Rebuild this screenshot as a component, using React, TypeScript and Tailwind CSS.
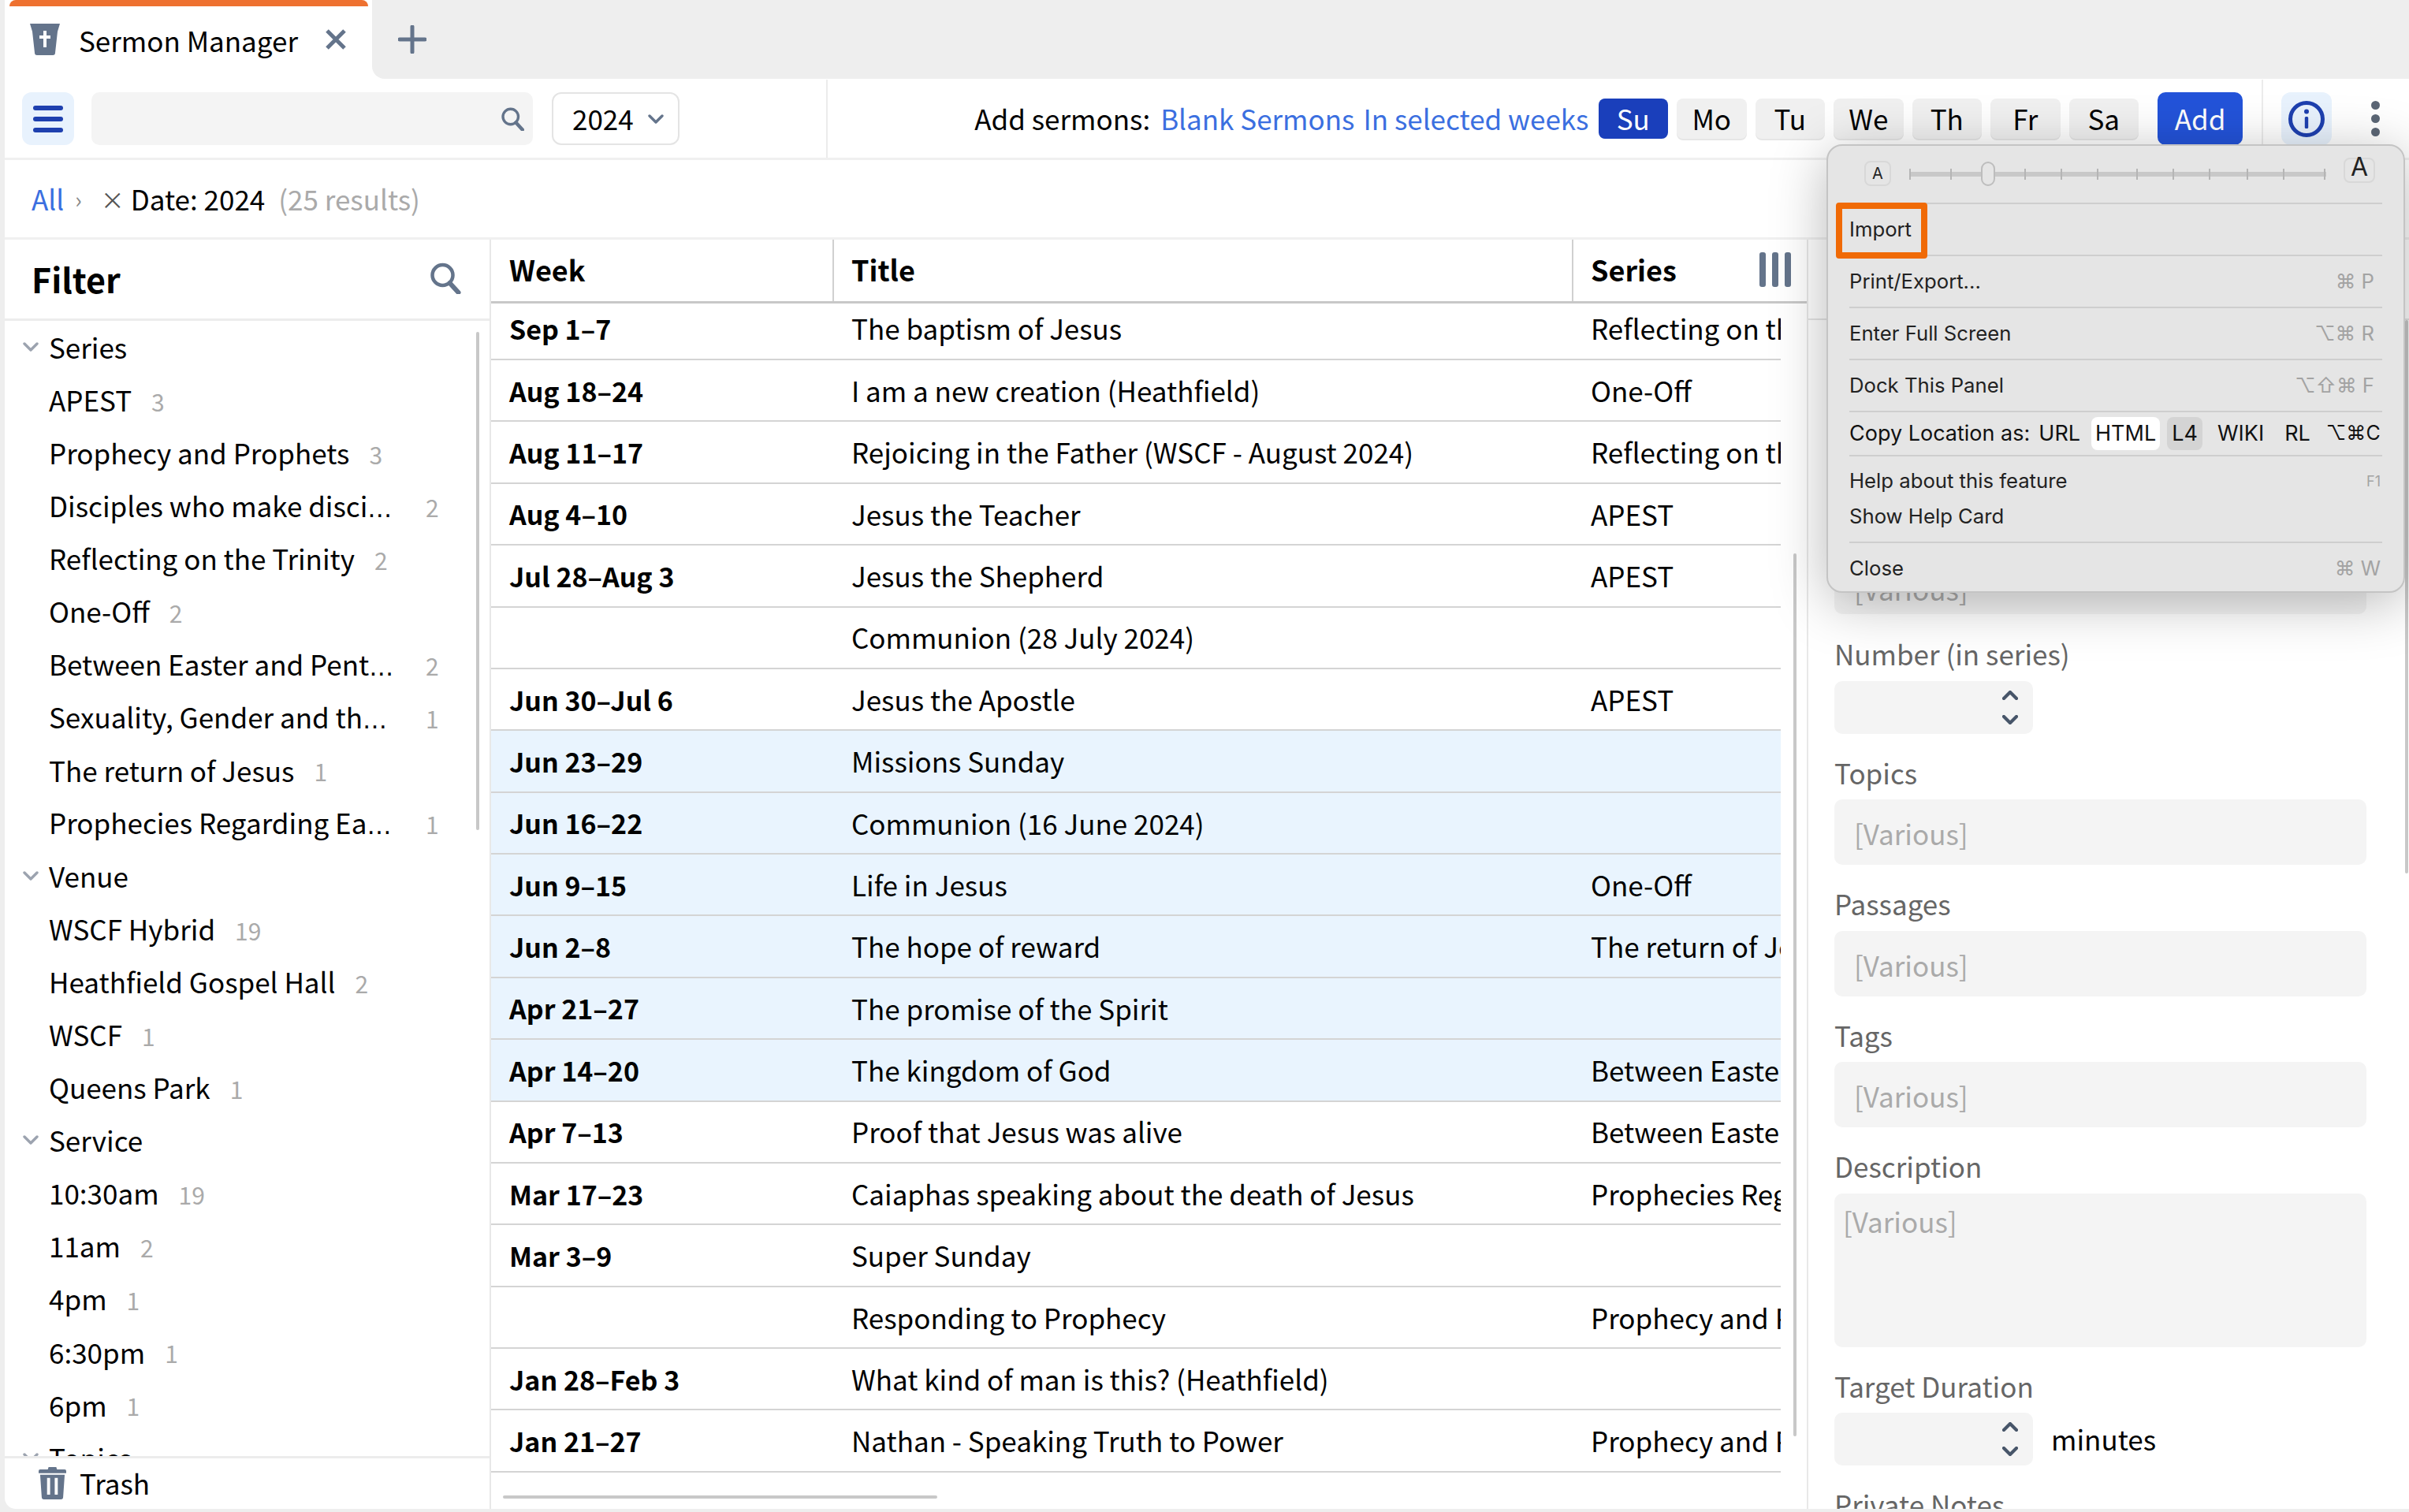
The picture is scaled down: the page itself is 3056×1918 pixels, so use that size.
import React from 'react'

interface FilterRow {
  label: string
  count?: number
  group?: boolean
  cut?: boolean
}

interface SermonRow {
  week: string
  title: string
  series: string
  selected?: boolean
}

const filterRows: FilterRow[] = [
  { label: 'Series', group: true },
  { label: 'APEST', count: 3 },
  { label: 'Prophecy and Prophets', count: 3 },
  { label: 'Disciples who make disci', count: 2, cut: true },
  { label: 'Reflecting on the Trinity', count: 2 },
  { label: 'One-Off', count: 2 },
  { label: 'Between Easter and Pent', count: 2, cut: true },
  { label: 'Sexuality, Gender and th', count: 1, cut: true },
  { label: 'The return of Jesus', count: 1 },
  { label: 'Prophecies Regarding Ea', count: 1, cut: true },
  { label: 'Venue', group: true },
  { label: 'WSCF Hybrid', count: 19 },
  { label: 'Heathfield Gospel Hall', count: 2 },
  { label: 'WSCF', count: 1 },
  { label: 'Queens Park', count: 1 },
  { label: 'Service', group: true },
  { label: '10:30am', count: 19 },
  { label: '11am', count: 2 },
  { label: '4pm', count: 1 },
  { label: '6:30pm', count: 1 },
  { label: '6pm', count: 1 },
  { label: 'Topics', group: true },
]

const sermons: SermonRow[] = [
  { week: 'Sep 1–7', title: 'The baptism of Jesus', series: 'Reflecting on the Trinity' },
  { week: 'Aug 18–24', title: 'I am a new creation (Heathfield)', series: 'One-Off' },
  { week: 'Aug 11–17', title: 'Rejoicing in the Father (WSCF - August 2024)', series: 'Reflecting on the Trinity' },
  { week: 'Aug 4–10', title: 'Jesus the Teacher', series: 'APEST' },
  { week: 'Jul 28–Aug 3', title: 'Jesus the Shepherd', series: 'APEST' },
  { week: '', title: 'Communion (28 July 2024)', series: '' },
  { week: 'Jun 30–Jul 6', title: 'Jesus the Apostle', series: 'APEST' },
  { week: 'Jun 23–29', title: 'Missions Sunday', series: '', selected: true },
  { week: 'Jun 16–22', title: 'Communion (16 June 2024)', series: '', selected: true },
  { week: 'Jun 9–15', title: 'Life in Jesus', series: 'One-Off', selected: true },
  { week: 'Jun 2–8', title: 'The hope of reward', series: 'The return of Jesus', selected: true },
  { week: 'Apr 21–27', title: 'The promise of the Spirit', series: '', selected: true },
  { week: 'Apr 14–20', title: 'The kingdom of God', series: 'Between Easter and Pentecost', selected: true },
  { week: 'Apr 7–13', title: 'Proof that Jesus was alive', series: 'Between Easter and Pentecost' },
  { week: 'Mar 17–23', title: 'Caiaphas speaking about the death of Jesus', series: 'Prophecies Regarding Easter' },
  { week: 'Mar 3–9', title: 'Super Sunday', series: '' },
  { week: '', title: 'Responding to Prophecy', series: 'Prophecy and Prophets' },
  { week: 'Jan 28–Feb 3', title: 'What kind of man is this? (Heathfield)', series: '' },
  { week: 'Jan 21–27', title: 'Nathan - Speaking Truth to Power', series: 'Prophecy and Prophets' },
]

const days = ['Su', 'Mo', 'Tu', 'We', 'Th', 'Fr', 'Sa']

function SearchIcon({ className }: { className: string }): React.JSX.Element {
  return (
    <svg viewBox="0 0 40 40" className={className} fill="none" stroke="#64748b">
      <circle cx="17" cy="16" r="13" strokeWidth="4.5" />
      <path d="M26 26 L37 38" strokeWidth="6" strokeLinecap="round" />
    </svg>
  )
}

function Chevron({ up, className }: { up?: boolean; className: string }): React.JSX.Element {
  return (
    <svg viewBox="0 0 20 12" className={className} fill="none" stroke="currentColor" strokeWidth="3.4" strokeLinecap="round" strokeLinejoin="round">
      <path d={up ? 'M2 10 L10 2 L18 10' : 'M2 2 L10 10 L18 2'} />
    </svg>
  )
}

function Stepper(): React.JSX.Element {
  return (
    <div className="flex h-[67px] w-[252px] flex-col items-end justify-center gap-[19px] rounded-[10px] bg-[#f4f4f4] pr-[19px] text-[#475569]">
      <Chevron up className="h-[12px] w-[20px] stroke-[4.2px]" />
      <Chevron className="h-[12px] w-[20px] stroke-[4.2px]" />
    </div>
  )
}

function FieldLabel({ children }: { children: React.ReactNode }): React.JSX.Element {
  return <div className="mb-[16.5px] pt-[31px] text-[35px] leading-[36px] text-[#666]">{children}</div>
}

function VariousInput({ textTop = 'pt-[4px]' }: { textTop?: string }): React.JSX.Element {
  return (
    <div className={`flex h-[83px] w-[675px] items-center rounded-[10px] bg-[#f4f4f4] pl-[25px] text-[35px] text-[#aaa] ${textTop}`}>[Various]</div>
  )
}

function FilterPanel(): React.JSX.Element {
  return (
    <div className="relative flex w-[615px] shrink-0 flex-col">
      <div className="flex h-[103px] shrink-0 items-center justify-between border-b-[3px] border-[#ececec] pb-[2px] pl-[34px] pr-[36px]">
        <span className="text-[43px] font-bold leading-none">Filter</span>
        <SearchIcon className="h-[40px] w-[41px]" />
      </div>
      <div className="min-h-0 flex-1 overflow-hidden">
        {filterRows.map((row) => (
          <div key={row.label} className="flex h-[67.1px] items-center pb-[1px] text-[35px]">
            {row.group ? (
              <>
                <Chevron className="ml-[22px] mr-[12px] h-[12px] w-[22px] text-[#9ca3af]" />
                <span>{row.label}</span>
              </>
            ) : (
              <>
                <span className={`ml-[56px] whitespace-nowrap ${row.cut ? 'w-[445px]' : ''}`}>
                  {row.label}
                  {row.cut && <span className="font-['DejaVu_Sans',sans-serif] text-[31px]">…</span>}
                </span>
                <span className={`pt-[4px] text-[30px] text-[#aaa] ${row.cut ? 'ml-[33px]' : 'ml-[25px]'}`}>{row.count}</span>
              </>
            )}
          </div>
        ))}
      </div>
      <div className="flex h-[67px] shrink-0 items-center border-t-[3px] border-[#ececec] pb-[2px] pl-[43px]">
        <svg viewBox="0 0 36 42" className="h-[41px] w-[35px]" fill="#64748b">
          <path d="M13 0 H23 L24 3 H34 Q36 3 36 5 V8 H0 V5 Q0 3 2 3 H12 Z" />
          <path fillRule="evenodd" d="M2 10 H34 L32 39 Q32 42 29 42 H7 Q4 42 4 39 Z M11 14 V36 H15 V14 Z M21 14 V36 H25 V14 Z" />
        </svg>
        <span className="ml-[17px] text-[35px]">Trash</span>
      </div>
      <div className="absolute left-[598px] top-[117px] h-[632px] w-[4px] rounded-full bg-[#c8c8c8]" />
    </div>
  )
}

function SermonTable(): React.JSX.Element {
  return (
    <div className="relative flex min-w-0 flex-1 flex-col border-x-2 border-[#e8e8e8]">
      <div className="relative grid h-[81px] shrink-0 grid-cols-[433px_938px_1fr] items-center border-b-[3px] border-[#c8c8c8] text-[36px] font-bold">
        <div className="pb-[4px] pl-[23px]">Week</div>
        <div className="flex h-[78px] items-center border-l-2 border-[#d0d0d0] pb-[4px] pl-[22px]">Title</div>
        <div className="flex h-[78px] items-center border-l-2 border-[#d0d0d0] pb-[4px] pl-[22px]">Series</div>
        <div className="absolute right-[20px] top-[16px] flex gap-[8px]">
          <div className="h-[44px] w-[8px] rounded-[3px] bg-[#64748b]" />
          <div className="h-[44px] w-[8px] rounded-[3px] bg-[#64748b]" />
          <div className="h-[44px] w-[8px] rounded-[3px] bg-[#64748b]" />
        </div>
      </div>
      <div className="w-[1636px]">
        {sermons.map((row, i) => (
          <div
            key={row.title}
            className={`grid grid-cols-[433px_938px_265px] items-center border-b-2 border-[#d4d4d4] text-[35px] ${i === 0 ? 'h-[72px] pb-[8px]' : 'h-[78.39px]'} ${row.selected ? 'bg-[#e9f4fe]' : ''}`}
          >
            <div className="pl-[23px] text-[34px] font-bold">{row.week}</div>
            <div className="pl-[24px]">{row.title}</div>
            <div className="overflow-hidden whitespace-nowrap pl-[24px]">{row.series}</div>
          </div>
        ))}
      </div>
      <div className="mt-[29px] ml-[15px] h-[4px] w-[551px] rounded-full bg-[#c8c8c8]" />
      <div className="absolute left-[1652px] top-[398px] h-[1120px] w-[4px] rounded-full bg-[#c8c8c8]" />
    </div>
  )
}

function DetailPanel(): React.JSX.Element {
  return (
    <div className="relative w-[762px] shrink-0 overflow-hidden">
      <div className="h-[101px] border-b-[3px] border-[#f0f0f0]" />
      <div className="h-[102px] border-b-[2px] border-[#e4e4e4]" />
      <div className="pl-[33px] pt-[290px]">
        <VariousInput textTop="pt-[20px]" />
        <div className="h-px" />
        <FieldLabel>Number (in series)</FieldLabel>
        <Stepper />
        <FieldLabel>Topics</FieldLabel>
        <VariousInput />
        <FieldLabel>Passages</FieldLabel>
        <VariousInput />
        <FieldLabel>Tags</FieldLabel>
        <VariousInput />
        <FieldLabel>Description</FieldLabel>
        <div className="h-[195px] w-[675px] rounded-[10px] bg-[#f4f4f4] pl-[11px] pt-[10px] text-[35px] leading-[50px] text-[#aaa]">[Various]</div>
        <FieldLabel>Target Duration</FieldLabel>
        <div className="flex items-center gap-[23px]">
          <Stepper />
          <span className="text-[35px]">minutes</span>
        </div>
        <FieldLabel>Private Notes</FieldLabel>
      </div>
      <div className="absolute right-[1px] top-[203px] h-[702px] w-[4px] rounded-full bg-[#c8c8c8]" />
    </div>
  )
}

function MenuRow({ label, keys, tight }: { label: string; keys?: string; tight?: boolean }): React.JSX.Element {
  return (
    <div className={`flex h-[66px] items-center justify-between ${tight ? 'pb-[2px] pr-[2px]' : 'pr-[10px] border-b-2 border-[#cecece]'}`}>
      <span>{label}</span>
      {keys && <span className="text-[#a3a3a3]">{keys}</span>}
    </div>
  )
}

function PanelMenu(): React.JSX.Element {
  return (
    <div className="absolute left-[2317px] top-[183px] h-[569px] w-[734px] rounded-[20px] border-2 border-[#c4c4c4] bg-[#e5e5e5] font-['Inter','DejaVu_Sans',sans-serif] text-[25.7px] text-[#222] shadow-[0_12px_70px_rgba(0,0,0,0.28)]">
      <div className="flex h-[72px] items-start pl-[46px] pt-[15px]">
        <div className="mt-[4px] flex h-[32px] w-[34px] items-center justify-center rounded-[8px] border-2 border-[#d8d8d8] text-[20px]">A</div>
        <svg viewBox="0 0 530 34" className="ml-[23px] mt-[4px] h-[34px] w-[530px]" fill="none">
          <rect x="1" y="14" width="528" height="6" fill="#c8c8c8" />
          <path
            d="M1 10V24 M53 10V24 M147 10V24 M193 10V24 M239 10V24 M289 10V24 M335 10V24 M381 10V24 M429 10V24 M475 10V24 M527 10V24"
            stroke="#b5b5b5"
            strokeWidth="2"
          />
          <rect x="92" y="2" width="16" height="29" rx="8" fill="#e5e5e5" stroke="#bdbdbd" strokeWidth="2" />
        </svg>
        <div className="ml-[21px] flex h-[32px] w-[40px] justify-center rounded-[8px] border-2 border-[#d8d8d8] text-[32px] leading-[20px]">A</div>
      </div>
      <div className="mx-[27px]">
        <div className="relative border-t-2 border-[#cecece]">
          <MenuRow label="Import" />
          <div className="absolute left-[-17px] top-[-2px] h-[71px] w-[116px] rounded-[4px] border-[8px] border-[#f06a06]" />
        </div>
        <MenuRow label="Print/Export..." keys="⌘ P" />
        <MenuRow label="Enter Full Screen" keys="⌥⌘ R" />
        <MenuRow label="Dock This Panel" keys="⌥⇧⌘ F" />
        <div className="flex h-[56px] items-center whitespace-nowrap border-b-2 border-[#cecece] text-[27px] text-[#111]">
          <span className="shrink-0">Copy Location as:</span>
          <span className="ml-[11px] shrink-0">URL</span>
          <span className="ml-[14px] shrink-0 rounded-[8px] bg-white px-[5px] py-[1px]">HTML</span>
          <span className="ml-[9px] shrink-0 rounded-[8px] bg-[#d4d4d4] px-[6px] py-[1px]">L4</span>
          <span className="ml-[19px] shrink-0">WIKI</span>
          <span className="ml-[26px] shrink-0">RL</span>
          <span className="ml-[20px] shrink-0 text-[25px]">⌥⌘C</span>
        </div>
        <div className="flex h-[110px] flex-col justify-center gap-[6px] border-b-2 border-[#cecece]">
          <div className="flex items-center justify-between pr-[2px]">
            <span>Help about this feature</span>
            <span className="text-[18px] text-[#a3a3a3]">F1</span>
          </div>
          <span>Show Help Card</span>
        </div>
        <MenuRow label="Close" keys="⌘ W" tight />
      </div>
    </div>
  )
}

export default function App(): React.JSX.Element {
  return (
    <div className="relative flex h-[1918px] w-[3056px] flex-col overflow-hidden bg-[#eeeeee] font-['Noto_Sans_CJK_KR',sans-serif] text-black">
      <div className="flex h-[100px] shrink-0 bg-white">
        <div className="w-[6px] bg-[#eeeeee]" />
        <div className="relative flex w-[466px] items-center rounded-t-[16px] bg-white pl-[32px]">
          <div className="absolute left-[6px] top-0 h-[8px] w-[455px] rounded-t-[10px] bg-[#ee7130]" />
          <svg viewBox="0 0 38 40" className="h-[40px] w-[38px] shrink-0" fill="#64748b">
            <path fillRule="evenodd" d="M0 0 H38 L35 10 L32 37 Q32 40 29 40 H9 Q6 40 6 37 L3 10 Z M17 9 V15 H12 V19 H17 V30 H21 V19 H26 V15 H21 V9 Z" />
          </svg>
          <span className="ml-[24px] whitespace-nowrap text-[35px] leading-none">Sermon Manager</span>
          <svg viewBox="0 0 28 28" className="ml-[34px] h-[28px] w-[28px] shrink-0" fill="none" stroke="#64748b" strokeWidth="5">
            <path d="M3 3 L25 25 M25 3 L3 25" />
          </svg>
        </div>
        <div className="flex flex-1 items-center rounded-bl-[16px] bg-[#eeeeee] pl-[33px]">
          <svg viewBox="0 0 36 36" className="h-[36px] w-[36px]" fill="none" stroke="#64748b" strokeWidth="5" strokeLinecap="round">
            <path d="M18 2 V34 M2 18 H34" />
          </svg>
        </div>
      </div>

      <div className="ml-[6px] mb-[4px] flex min-h-0 flex-1 flex-col rounded-bl-[14px] bg-white">
        <div className="flex h-[103px] shrink-0 items-center border-b-[3px] border-[#f0f0f0] pt-[1px] text-[35px]">
          <div className="flex h-full w-[1044px] shrink-0 items-center border-r-2 border-[#ececec] pl-[22px]">
            <div className="flex h-[67px] w-[66px] flex-col items-center justify-center gap-[8px] rounded-[12px] bg-[#e8f2fd]">
              <div className="h-[6px] w-[38px] rounded-full bg-[#1e40af]" />
              <div className="h-[6px] w-[38px] rounded-full bg-[#1e40af]" />
              <div className="h-[6px] w-[38px] rounded-full bg-[#1e40af]" />
            </div>
            <div className="ml-[22px] flex h-[67px] w-[560px] items-center justify-end rounded-[10px] bg-[#f4f4f4] pr-[11px]">
              <SearchIcon className="h-[30px] w-[30px]" />
            </div>
            <div className="ml-[24px] flex h-[67px] w-[162px] items-center rounded-[12px] border-2 border-[#e4e4e4] pl-[24px]">
              <span>2024</span>
              <Chevron className="ml-[17px] h-[12px] w-[22px] text-[#64748b]" />
            </div>
          </div>
          <div className="flex flex-1 items-center justify-end">
            <span>Add sermons:</span>
            <span className="ml-[13px] text-[#3b6fe0]">Blank Sermons</span>
            <span className="ml-[11px] text-[#3b6fe0]">In selected weeks</span>
            <div className="ml-[12px] flex gap-[11px]">
              {days.map((day) => (
                <div
                  key={day}
                  className={`flex h-[51px] w-[88.5px] items-center justify-center rounded-[8px] ${day === 'Su' ? 'bg-[#1a3fbb] text-white' : 'bg-[#f0f0f0] shadow-[0_2px_0_#e6e6e6]'}`}
                >
                  {day}
                </div>
              ))}
            </div>
            <div className="ml-[24px] flex h-[67px] w-[108px] items-center justify-center rounded-[10px] bg-[#2353d9] text-white">Add</div>
          </div>
          <div className="ml-[24px] flex h-full w-[187px] shrink-0 items-center border-l-2 border-[#ececec] pl-[23px]">
            <div className="flex h-[67px] w-[64px] items-center justify-center rounded-[12px] bg-[#e8f2fd]">
              <svg viewBox="0 0 48 48" className="h-[48px] w-[48px]" fill="none">
                <circle cx="24" cy="24" r="20.5" stroke="#1e40af" strokeWidth="5" />
                <circle cx="24" cy="14.5" r="3" fill="#1e40af" />
                <rect x="21.8" y="21" width="4.4" height="15" rx="1.5" fill="#1e40af" />
              </svg>
            </div>
            <div className="ml-[50px] flex flex-col gap-[6px]">
              <div className="h-[11px] w-[11px] rounded-full bg-[#5b6675]" />
              <div className="h-[11px] w-[11px] rounded-full bg-[#5b6675]" />
              <div className="h-[11px] w-[11px] rounded-full bg-[#5b6675]" />
            </div>
          </div>
        </div>

        <div className="flex min-h-0 flex-1">
          <div className="flex min-w-0 flex-1 flex-col">
            <div className="flex h-[101px] shrink-0 items-center border-b-[3px] border-[#f0f0f0] pl-[34px] text-[35px]">
              <span className="text-[#3b6fe0]">All</span>
              <span className="ml-[14px] text-[28px] text-[#888]">›</span>
              <span className="ml-[24px] text-[30px] text-[#555]">×</span>
              <span className="ml-[8px]">Date: 2024</span>
              <span className="ml-[17px] text-[#aaa]">(25 results)</span>
            </div>
            <div className="flex min-h-0 flex-1">
              <FilterPanel />
              <SermonTable />
            </div>
          </div>
          <DetailPanel />
        </div>
      </div>

      <PanelMenu />
    </div>
  )
}
